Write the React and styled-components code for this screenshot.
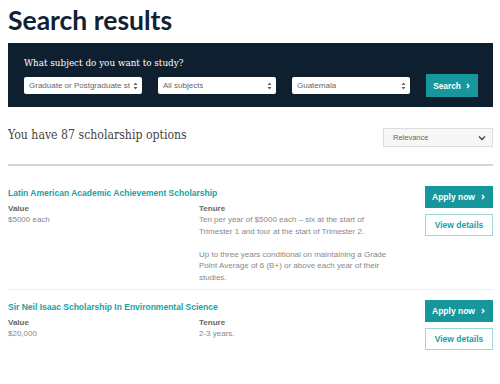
import React from 'react';
import styled, { createGlobalStyle } from 'styled-components';

const GlobalStyle = createGlobalStyle`
  body {
    margin: 0;
    background: #ffffff;
    font-family: "Liberation Sans", Arial, sans-serif;
  }
`;

const results = [
  {
    id: 1,
    title: 'Latin American Academic Achievement Scholarship',
    value: '$5000 each',
    tenure: [
      'Ten per year of $5000 each – six at the start of Trimester 1 and four at the start of Trimester 2.',
      'Up to three years conditional on maintaining a Grade Point Average of 6 (B+) or above each year of their studies.',
    ],
  },
  {
    id: 2,
    title: 'Sir Neil Isaac Scholarship In Environmental Science',
    value: '$20,000',
    tenure: ['2-3 years.'],
  },
];

const Arrows = () => (
  <svg width="5" height="8" viewBox="0 0 5 8">
    <path d="M2.5 0.5 L4.5 3 H0.5 Z M2.5 7.5 L4.5 5 H0.5 Z" fill="#666" />
  </svg>
);

const Chevron = ({ color = '#fff', size = 6 }) => (
  <svg width={size} height={size} viewBox="0 0 6 6">
    <path d="M2 1 L4 3 L2 5" stroke={color} strokeWidth="1.3" fill="none" />
  </svg>
);

const ChevronDown = () => (
  <svg width="8" height="6" viewBox="0 0 8 6">
    <path d="M1 1.5 L4 4.5 L7 1.5" stroke="#444" strokeWidth="1.4" fill="none" />
  </svg>
);

const App = () => {
  return (
    <Page>
      <GlobalStyle />
      <Heading>Search results</Heading>
      <SearchPanel>
        <PanelLabel>What subject do you want to study?</PanelLabel>
        <PanelRow>
          <Select>
            <span>Graduate or Postgraduate st</span>
            <Arrows />
          </Select>
          <Select>
            <span>All subjects</span>
            <Arrows />
          </Select>
          <Select>
            <span>Guatemala</span>
            <Arrows />
          </Select>
          <SearchBtn>
            Search <Chevron />
          </SearchBtn>
        </PanelRow>
      </SearchPanel>

      <CountRow>
        <CountText>You have 87 scholarship options</CountText>
        <SortBox>
          <span>Relevance</span>
          <ChevronDown />
        </SortBox>
      </CountRow>
      <Divider />

      <ResultList>
        {results.map((item) => (
          <ResultItem key={item.id}>
            <ResultInfo>
              <ResultTitle>{item.title}</ResultTitle>
              <Fields>
                <Field>
                  <FieldLabel>Value</FieldLabel>
                  <FieldText>{item.value}</FieldText>
                </Field>
                <Field>
                  <FieldLabel>Tenure</FieldLabel>
                  {item.tenure.map((t, i) => (
                    <FieldText key={i}>{t}</FieldText>
                  ))}
                </Field>
              </Fields>
            </ResultInfo>
            <Actions>
              <ApplyBtn>
                Apply now <Chevron />
              </ApplyBtn>
              <DetailsBtn>View details</DetailsBtn>
            </Actions>
          </ResultItem>
        ))}
      </ResultList>
    </Page>
  );
};

export default App;

const Page = styled.div`
  width: 485px;
  padding: 0 7px 0 8px;
`;

const Heading = styled.h1`
  margin: 0;
  padding-top: 2px;
  height: 41px;
  font-family: Lato, "Noto Sans", sans-serif;
  font-weight: 700;
  font-size: 26.5px;
  line-height: 36px;
  color: #0f2133;
`;

const SearchPanel = styled.div`
  background: #0e1f2f;
  height: 64px;
  box-sizing: border-box;
  padding: 13px 15px 0 16px;
`;

const PanelLabel = styled.div`
  font-family: "DejaVu Serif", "Liberation Serif", serif;
  font-stretch: condensed;
  font-size: 9.8px;
  line-height: 13px;
  color: #ffffff;
  margin-bottom: 5px;
`;

const PanelRow = styled.div`
  display: flex;
  align-items: center;
  gap: 16px;
`;

const Select = styled.div`
  width: 118px;
  height: 17px;
  box-sizing: border-box;
  background: #fff;
  border-radius: 2px;
  display: flex;
  align-items: center;
  justify-content: space-between;
  gap: 2px;
  padding: 0 4px 0 5px;
  font-size: 8px;
  color: #666;
  white-space: nowrap;
  overflow: hidden;

  span {
    overflow: hidden;
  }
`;

const SearchBtn = styled.div`
  width: 52px;
  height: 23px;
  background: #17979c;
  color: #fff;
  font-weight: 700;
  font-size: 8.3px;
  display: flex;
  align-items: center;
  justify-content: center;
  gap: 4px;
`;

const CountRow = styled.div`
  display: flex;
  justify-content: space-between;
  align-items: center;
  margin-top: 21px;
`;

const CountText = styled.div`
  font-family: "DejaVu Serif", "Liberation Serif", serif;
  font-stretch: condensed;
  font-size: 12.2px;
  color: #444;
  margin-top: -5px;
`;

const SortBox = styled.div`
  width: 110px;
  height: 19px;
  box-sizing: border-box;
  background: #f7f7f7;
  border: 1px solid #ddd;
  display: flex;
  align-items: center;
  justify-content: space-between;
  padding: 0 6px 0 9px;
  font-size: 7.5px;
  color: #666;
`;

const Divider = styled.div`
  margin-top: 17px;
  height: 2px;
  background: #d6d6d6;
`;

const ResultList = styled.div`
  display: flex;
  flex-direction: column;
  margin-top: 10px;
`;

const ResultItem = styled.div`
  display: flex;
  justify-content: space-between;
  padding: 10px 0 6px;

  & + & {
    border-top: 1px solid #eee;
  }
`;

const ResultInfo = styled.div`
  flex: 1;
  padding-top: 1.5px;
`;

const ResultTitle = styled.div`
  font-weight: 700;
  font-size: 8.5px;
  line-height: 11px;
  color: #18a1a5;
  margin-bottom: 4px;
`;

const Fields = styled.div`
  display: grid;
  grid-template-columns: 191px 189.5px;
`;

const Field = styled.div`
  display: flex;
  flex-direction: column;
  gap: 11.5px;
`;

const FieldLabel = styled.div`
  font-weight: 700;
  font-size: 8px;
  line-height: 11.5px;
  color: #666;
  margin-bottom: -11.5px;
`;

const FieldText = styled.div`
  font-size: 8px;
  line-height: 11.5px;
  color: #888;
`;

const Actions = styled.div`
  display: flex;
  flex-direction: column;
  gap: 6px;
  width: 68px;
`;

const ApplyBtn = styled.div`
  height: 22px;
  background: #17979c;
  color: #fff;
  font-weight: 700;
  font-size: 8.5px;
  display: flex;
  align-items: center;
  justify-content: center;
  gap: 5px;
`;

const DetailsBtn = styled.div`
  height: 22px;
  box-sizing: border-box;
  border: 1px solid #9fd6d8;
  color: #18a1a5;
  font-weight: 700;
  font-size: 8.5px;
  display: flex;
  align-items: center;
  justify-content: center;
`;
